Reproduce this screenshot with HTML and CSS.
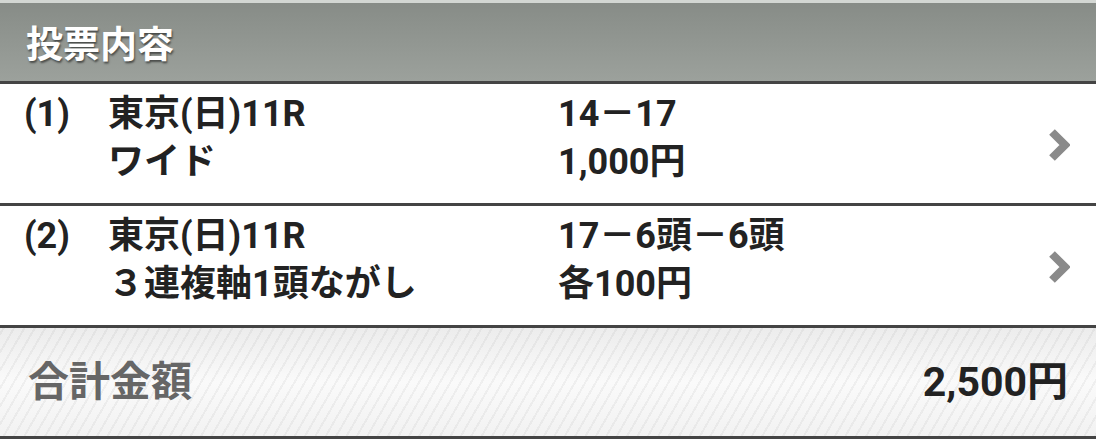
FILE: index.html
```html
<!DOCTYPE html>
<html lang="ja">
<head>
    <meta charset="UTF-8">
    <meta name="viewport" content="width=device-width, initial-scale=1.0">
    <title>投票内容</title>
    <link rel="stylesheet" href="styles.css">
</head>
<body>

<div class="vote-panel">
    <div class="panel-header">投票内容</div>

    <!-- 投票明細 -->
    <div class="vote-row">
        <div class="vote-no">(1)</div>
        <div class="vote-race">
            <div>東京(日)11R</div>
            <div>ワイド</div>
        </div>
        <div class="vote-bet">
            <div>14－17</div>
            <div>1,000円</div>
        </div>
        <svg class="chevron" viewBox="0 0 22 34"><path d="M4 4 L17 17 L4 30" /></svg>
    </div>
    <div class="vote-row">
        <div class="vote-no">(2)</div>
        <div class="vote-race">
            <div>東京(日)11R</div>
            <div>３連複軸1頭ながし</div>
        </div>
        <div class="vote-bet">
            <div>17－6頭－6頭</div>
            <div>各100円</div>
        </div>
        <svg class="chevron" viewBox="0 0 22 34"><path d="M4 4 L17 17 L4 30" /></svg>
    </div>

    <div class="total-row">
        <div class="total-label">合計金額</div>
        <div class="total-amount">2,500円</div>
    </div>
</div>

</body>
</html>
```

FILE: styles.css
```css
body {
    margin: 0;
    font-family: Roboto, "Noto Sans CJK JP", sans-serif;
    background-color: #fff;
    color: #222;
}
.vote-panel {
    width: 1096px;
}
.panel-header {
    height: 78px;
    padding-left: 26px;
    display: flex;
    align-items: center;
    border-top: 3px solid #d3d7d3;
    border-bottom: 3px solid #444;
    background: linear-gradient(#878c87, #9ca19c);
    color: #fff;
    font-size: 37px;
    font-weight: bold;
    text-shadow: 1px 2px 2px rgba(0, 0, 0, 0.5);
}
.vote-row {
    display: flex;
    align-items: flex-start;
    height: 113px;
    padding-top: 6px;
    border-bottom: 3px solid #444;
    font-size: 36px;
    font-weight: bold;
    line-height: 48px;
}
.vote-no {
    width: 84px;
    padding-left: 24px;
}
.vote-race {
    width: 450px;
}
.vote-bet {
    flex: 1;
}
.chevron {
    width: 22px;
    height: 34px;
    margin: 38px 26px 0 0;
}
.chevron path {
    fill: none;
    stroke: #8a8a8a;
    stroke-width: 8;
}
.total-row {
    height: 100px;
    padding: 0 28px 8px;
    display: flex;
    align-items: center;
    justify-content: space-between;
    border-bottom: 3px solid #444;
    background:
        repeating-linear-gradient(-60deg, rgba(0, 0, 0, 0.045) 0 2px, transparent 2px 9px),
        linear-gradient(#ececec, #fafafa 50%, #f2f2f2);
    font-weight: bold;
}
.total-label {
    font-size: 41px;
    color: #666;
}
.total-amount {
    font-size: 41px;
    color: #222;
}
```
